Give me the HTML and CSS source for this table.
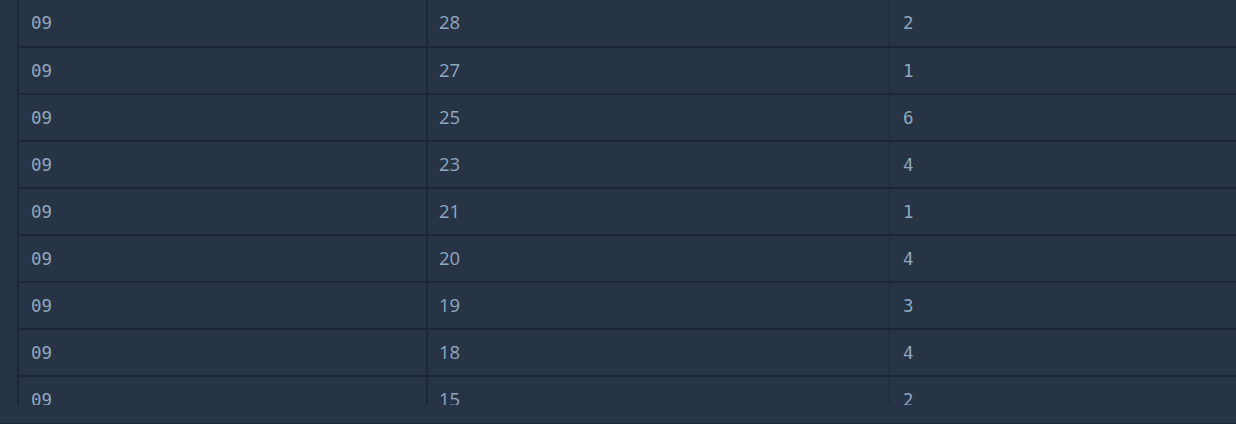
FILE: index.html
```html
<!DOCTYPE html>
<html>
<head>
<meta charset="utf-8">
<link rel="stylesheet" href="styles.css">
</head>
<body>
<div class="panel">
  <div class="scroller">
    <table class="grid">
      <tbody>
        <tr class="first"><td class="c1">09</td><td class="c2">28</td><td class="c3">2</td></tr>
        <tr><td class="c1">09</td><td class="c2">27</td><td class="c3">1</td></tr>
        <tr><td class="c1">09</td><td class="c2">25</td><td class="c3">6</td></tr>
        <tr><td class="c1">09</td><td class="c2">23</td><td class="c3">4</td></tr>
        <tr><td class="c1">09</td><td class="c2">21</td><td class="c3">1</td></tr>
        <tr><td class="c1">09</td><td class="c2">20</td><td class="c3">4</td></tr>
        <tr><td class="c1">09</td><td class="c2">19</td><td class="c3">3</td></tr>
        <tr><td class="c1">09</td><td class="c2">18</td><td class="c3">4</td></tr>
        <tr><td class="c1">09</td><td class="c2">15</td><td class="c3">2</td></tr>
      </tbody>
    </table>
  </div>
</div>
</body>
</html>
```
FILE: styles.css
```css
html, body {
  margin: 0;
  padding: 0;
  background: #263445;
}
.panel {
  width: 1236px;
  height: 423px;
  border-bottom: 1px solid #1c2736;
  overflow: hidden;
}
.scroller {
  margin-left: 17px;
  height: 405px;
  overflow: hidden;
  border-left: 2px solid #1c2736;
}
.grid {
  border-collapse: collapse;
  width: 1217px;
  table-layout: fixed;
}
.grid td {
  height: 45px;
  padding: 0 12px;
  border-bottom: 2px solid #1c2736;
  color: #8fa7bf;
  vertical-align: middle;
  box-sizing: content-box;
}
.grid .first td {
  height: 46px;
}
.c1 {
  width: 383px;
  font-family: "DejaVu Sans Mono", monospace;
  font-size: 17.5px;
  border-right: 2px solid #1c2736;
}
.grid .c2 {
  width: 438px;
  height: 40px;
  font-family: "Open Sans", sans-serif;
  font-size: 18.5px;
  padding-left: 11px;
  padding-bottom: 3px;
  border-right: 1px solid #1c2736;
}
.grid .first .c2 {
  height: 40px;
}
.grid .c3 {
  font-family: "DejaVu Sans Mono", monospace;
  font-size: 17.5px;
  padding-left: 13px;
}
```
